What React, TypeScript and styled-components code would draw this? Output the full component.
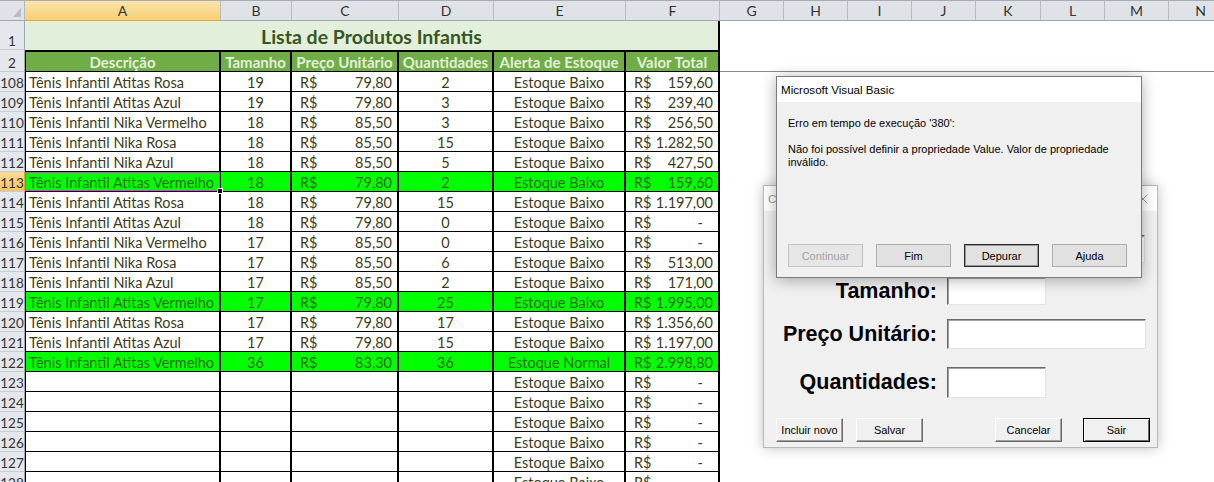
import React, { Fragment } from 'react';
import styled, { createGlobalStyle, css } from 'styled-components';

const SHEET_FONT = `Lato, "Open Sans", sans-serif`;
const UI_FONT = `"Liberation Sans", Arial, sans-serif`;

const GlobalStyle = createGlobalStyle`
  *, *::before, *::after { box-sizing: border-box; }
  html, body { margin: 0; padding: 0; background: #fff; }
  body { overflow: hidden; }
`;

const Page = styled.div`
  position: relative;
  width: 1214px;
  height: 482px;
  overflow: hidden;
  background: #fff;
`;

/* ---------- spreadsheet ---------- */

const Sheet = styled.div`
  display: grid;
  grid-template-columns: 25px 196px 71px 107px 95px 132px 94px 64px 64px 64px 64px 65px 64px 64px 64px;
  grid-template-rows: 21px 29px 22px repeat(21, 20px);
  font-family: ${SHEET_FONT};
  font-size: 14.5px;
  color: #42401d;
`;

const Corner = styled.div`
  position: relative;
  background: #dfe3e8;
  border-top: 1px solid #a5acb5;
  border-right: 1px solid #b1b8c1;
  border-bottom: 1px solid #9ea6b0;

  &::after {
    content: '';
    position: absolute;
    right: 3px;
    bottom: 3px;
    width: 8px;
    height: 9px;
    background: #b7bcc3;
    clip-path: polygon(100% 0, 100% 100%, 0 100%);
  }
`;

const ColHead = styled.div<{ $active?: boolean }>`
  display: flex;
  align-items: center;
  justify-content: center;
  font-size: 14px;
  color: #333;
  border-top: 1px solid #a5acb5;
  border-right: 1px solid #b6bcc4;
  ${(p) =>
    p.$active
      ? css`
          background: linear-gradient(#fbe4a9, #f7cf74);
          border-bottom: 1px solid #e2a43c;
        `
      : css`
          background: #dfe3e8;
          border-bottom: 1px solid #9ea6b0;
        `}
`;

const RowHead = styled.div<{ $active?: boolean }>`
  display: flex;
  align-items: flex-end;
  justify-content: center;
  line-height: 16px;
  font-size: 13.5px;
  color: #333;
  border-bottom: 1px solid #c6ccd4;
  ${(p) =>
    p.$active
      ? css`
          background: linear-gradient(#fadc96, #f5c566);
          border-right: 1px solid #e2a43c;
        `
      : css`
          background: #e4e7ec;
          border-right: 1px solid #9ea6b0;
        `}
`;

const TitleCell = styled.div`
  grid-column: 2 / 8;
  display: flex;
  align-items: center;
  justify-content: center;
  padding-top: 1px;
  background: #e2efda;
  border-right: 2px solid #000;
  color: #375623;
  font-weight: 700;
  font-size: 19.5px;
`;

const HeadCell = styled.div<{ $first?: boolean }>`
  display: flex;
  align-items: center;
  justify-content: center;
  padding-top: 1px;
  background: #70ad47;
  color: #e2efda;
  font-weight: 700;
  font-size: 15px;
  white-space: nowrap;
  overflow: hidden;
  border-top: 2px solid #000;
  border-right: 2px solid #000;
  border-bottom: 1px solid #000;
  ${(p) => p.$first && 'border-left: 1px solid #000;'}
`;

const Blank = styled.div<{ $freeze?: boolean }>`
  grid-column: 8 / -1;
  background: #fff;
  ${(p) => p.$freeze && 'border-bottom: 1px solid #8a8a8a;'}
`;

const Cell = styled.div<{ $green?: boolean; $center?: boolean; $first?: boolean }>`
  position: relative;
  display: flex;
  align-items: flex-end;
  justify-content: ${(p) => (p.$center ? 'center' : 'flex-start')};
  padding: 0 3px;
  white-space: nowrap;
  line-height: 16px;
  background: ${(p) => (p.$green ? '#00ff00' : '#fff')};
  color: ${(p) => (p.$green ? '#2c6b17' : '#3d3b1a')};
  border-right: 2px solid #000;
  border-bottom: 1px solid #000;
  ${(p) => p.$first && 'border-left: 1px solid #000;'}
`;

const MoneyCell = styled(Cell)`
  justify-content: space-between;
  padding: 0 5px 0 8px;
`;

const Amount = styled.span<{ $dash?: boolean }>`
  ${(p) => p.$dash && 'margin-right: 10px;'}
`;

const Selection = styled.div`
  position: absolute;
  inset: 0 -1px 0 -1px;
  box-shadow: inset 0 0 0 1px #e03de0;
  z-index: 2;
  pointer-events: none;
`;

const FillHandle = styled.div`
  position: absolute;
  right: -3px;
  bottom: -3px;
  width: 6px;
  height: 6px;
  background: #000;
  border: 1px solid #fff;
`;

/* ---------- windows ---------- */

const FormWindow = styled.div`
  position: absolute;
  left: 763px;
  top: 185px;
  width: 395px;
  height: 263px;
  display: flex;
  flex-direction: column;
  background: #f0f0f0;
  border: 1px solid #b8b8b8;
  box-shadow: 0 0 12px rgba(0, 0, 0, 0.25);
  font-family: ${UI_FONT};
  z-index: 4;
`;

const MsgWindow = styled.div`
  position: absolute;
  left: 776px;
  top: 76px;
  width: 366px;
  height: 202px;
  display: flex;
  flex-direction: column;
  background: #f0f0f0;
  border: 1px solid #7b7b7b;
  box-shadow: 0 2px 14px rgba(0, 0, 0, 0.32);
  font-family: ${UI_FONT};
  z-index: 6;
`;

const TitleBar = styled.div<{ $inactive?: boolean }>`
  flex: 0 0 25px;
  display: flex;
  align-items: center;
  justify-content: space-between;
  padding: 0 9px 0 4px;
  background: #fff;
  font-size: 11.6px;
  color: ${(p) => (p.$inactive ? '#9b9b9b' : '#000')};
`;

const FormBody = styled.div`
  flex: 1;
  display: flex;
  flex-direction: column;
  padding-top: 24px;
`;

const FieldRow = styled.div<{ $gap: number }>`
  display: grid;
  grid-template-columns: 173px auto;
  column-gap: 10px;
  align-items: center;
  margin-top: ${(p) => p.$gap}px;
`;

const FieldLabel = styled.div`
  text-align: right;
  font-weight: 700;
  font-size: 21.5px;
  color: #000;
  white-space: nowrap;
`;

const TextBox = styled.div<{ $w: number; $h: number }>`
  width: ${(p) => p.$w}px;
  height: ${(p) => p.$h}px;
  background: #fff;
  border: 1px solid;
  border-color: #6a6a6a #e3e3e3 #e3e3e3 #6a6a6a;
  box-shadow: inset 1px 1px 0 #a0a0a0;
`;

const FormButtons = styled.div`
  display: flex;
  justify-content: space-between;
  margin-top: 20px;
  padding: 0 7px 0 12px;
`;

const ButtonGroup = styled.div<{ $gap: number }>`
  display: flex;
  gap: ${(p) => p.$gap}px;
`;

const FormButton = styled.div<{ $default?: boolean }>`
  width: 67px;
  height: 24px;
  display: flex;
  align-items: center;
  justify-content: center;
  font-size: 11px;
  color: #000;
  background: #f0f0f0;
  border: 1px solid;
  border-color: #fff #6a6a6a #6a6a6a #fff;
  box-shadow: inset -1px -1px 0 #a0a0a0;
  ${(p) =>
    p.$default &&
    css`
      border: 1px solid #000;
      box-shadow: inset 1px 1px 0 #fff, inset -1px -1px 0 #6a6a6a;
    `}
`;

const MsgBody = styled.div`
  flex: 1;
  display: flex;
  flex-direction: column;
  padding: 15px 12px 10px 11px;
`;

const MsgText = styled.p`
  margin: 0;
  font-size: 11px;
  line-height: 13px;
  color: #000;
  white-space: nowrap;
`;

const MsgButtons = styled.div`
  margin-top: auto;
  display: flex;
  gap: 13px;
`;

const MsgButton = styled.div<{ $state?: 'disabled' | 'default' }>`
  width: 75px;
  height: 23px;
  display: flex;
  align-items: center;
  justify-content: center;
  font-size: 11px;
  color: #000;
  background: #e1e1e1;
  border: 1px solid #adadad;
  ${(p) =>
    p.$state === 'disabled' &&
    css`
      color: #a3a3a3;
      background: #e6e6e6;
      border-color: #c4c4c4;
    `}
  ${(p) =>
    p.$state === 'default' &&
    css`
      border-color: #2a2a2a;
      box-shadow: inset 0 0 0 1px #9a9a9a;
    `}
`;

const CloseIcon = () => (
  <svg width="10" height="10" viewBox="0 0 10 10">
    <path d="M0.5 0.5 L9.5 9.5 M9.5 0.5 L0.5 9.5" stroke="#9b9b9b" strokeWidth="1" fill="none" />
  </svg>
);

/* ---------- data ---------- */

type Item = {
  n: number;
  desc?: string;
  tam?: string;
  preco?: string;
  qtd?: string;
  alerta: string;
  total: string;
  green?: boolean;
};

const LETTERS = ['A', 'B', 'C', 'D', 'E', 'F', 'G', 'H', 'I', 'J', 'K', 'L', 'M', 'N'];
const HEADERS = ['Descrição', 'Tamanho', 'Preço Unitário', 'Quantidades', 'Alerta de Estoque', 'Valor Total'];

const BAIXO = 'Estoque Baixo';

const ITEMS: Item[] = [
  { n: 108, desc: 'Tênis Infantil Atitas Rosa', tam: '19', preco: '79,80', qtd: '2', alerta: BAIXO, total: '159,60' },
  { n: 109, desc: 'Tênis Infantil Atitas Azul', tam: '19', preco: '79,80', qtd: '3', alerta: BAIXO, total: '239,40' },
  { n: 110, desc: 'Tênis Infantil Nika Vermelho', tam: '18', preco: '85,50', qtd: '3', alerta: BAIXO, total: '256,50' },
  { n: 111, desc: 'Tênis Infantil Nika Rosa', tam: '18', preco: '85,50', qtd: '15', alerta: BAIXO, total: '1.282,50' },
  { n: 112, desc: 'Tênis Infantil Nika Azul', tam: '18', preco: '85,50', qtd: '5', alerta: BAIXO, total: '427,50' },
  { n: 113, desc: 'Tênis Infantil Atitas Vermelho', tam: '18', preco: '79,80', qtd: '2', alerta: BAIXO, total: '159,60', green: true },
  { n: 114, desc: 'Tênis Infantil Atitas Rosa', tam: '18', preco: '79,80', qtd: '15', alerta: BAIXO, total: '1.197,00' },
  { n: 115, desc: 'Tênis Infantil Atitas Azul', tam: '18', preco: '79,80', qtd: '0', alerta: BAIXO, total: '-' },
  { n: 116, desc: 'Tênis Infantil Nika Vermelho', tam: '17', preco: '85,50', qtd: '0', alerta: BAIXO, total: '-' },
  { n: 117, desc: 'Tênis Infantil Nika Rosa', tam: '17', preco: '85,50', qtd: '6', alerta: BAIXO, total: '513,00' },
  { n: 118, desc: 'Tênis Infantil Nika Azul', tam: '17', preco: '85,50', qtd: '2', alerta: BAIXO, total: '171,00' },
  { n: 119, desc: 'Tênis Infantil Atitas Vermelho', tam: '17', preco: '79,80', qtd: '25', alerta: BAIXO, total: '1.995,00', green: true },
  { n: 120, desc: 'Tênis Infantil Atitas Rosa', tam: '17', preco: '79,80', qtd: '17', alerta: BAIXO, total: '1.356,60' },
  { n: 121, desc: 'Tênis Infantil Atitas Azul', tam: '17', preco: '79,80', qtd: '15', alerta: BAIXO, total: '1.197,00' },
  { n: 122, desc: 'Tênis Infantil Atitas Vermelho', tam: '36', preco: '83,30', qtd: '36', alerta: 'Estoque Normal', total: '2.998,80', green: true },
  ...[123, 124, 125, 126, 127, 128].map((n) => ({ n, alerta: BAIXO, total: '-' })),
];

const SELECTED_ROW = 113;

function DataRow({ item }: { item: Item }) {
  const g = item.green;
  return (
    <>
      <RowHead $active={item.n === SELECTED_ROW}>{item.n}</RowHead>
      <Cell $first $green={g}>
        {item.desc}
        {item.n === SELECTED_ROW && (
          <Selection>
            <FillHandle />
          </Selection>
        )}
      </Cell>
      <Cell $center $green={g}>{item.tam}</Cell>
      {item.preco ? (
        <MoneyCell $green={g}>
          <span>R$</span>
          <Amount>{item.preco}</Amount>
        </MoneyCell>
      ) : (
        <Cell />
      )}
      <Cell $center $green={g}>{item.qtd}</Cell>
      <Cell $center $green={g}>{item.alerta}</Cell>
      <MoneyCell $green={g}>
        <span>R$</span>
        <Amount $dash={item.total === '-'}>{item.total}</Amount>
      </MoneyCell>
      <Blank />
    </>
  );
}

export default function App() {
  return (
    <Page>
      <GlobalStyle />
      <Sheet>
        <Corner />
        {LETTERS.map((l) => (
          <ColHead key={l} $active={l === 'A'}>
            {l}
          </ColHead>
        ))}

        <RowHead>1</RowHead>
        <TitleCell>Lista de Produtos Infantis</TitleCell>
        <Blank />

        <RowHead>2</RowHead>
        {HEADERS.map((h, i) => (
          <HeadCell key={h} $first={i === 0}>
            {h}
          </HeadCell>
        ))}
        <Blank $freeze />

        {ITEMS.map((item) => (
          <Fragment key={item.n}>
            <DataRow item={item} />
          </Fragment>
        ))}
      </Sheet>

      <FormWindow>
        <TitleBar $inactive>
          <span>Cadastro de Produtos</span>
          <CloseIcon />
        </TitleBar>
        <FormBody>
          <FieldRow $gap={0}>
            <FieldLabel>Descrição:</FieldLabel>
            <TextBox $w={198} $h={28} />
          </FieldRow>
          <FieldRow $gap={14}>
            <FieldLabel>Tamanho:</FieldLabel>
            <TextBox $w={99} $h={28} />
          </FieldRow>
          <FieldRow $gap={14}>
            <FieldLabel>Preço Unitário:</FieldLabel>
            <TextBox $w={199} $h={30} />
          </FieldRow>
          <FieldRow $gap={18}>
            <FieldLabel>Quantidades:</FieldLabel>
            <TextBox $w={99} $h={31} />
          </FieldRow>
          <FormButtons>
            <ButtonGroup $gap={13}>
              <FormButton>Incluir novo</FormButton>
              <FormButton>Salvar</FormButton>
            </ButtonGroup>
            <ButtonGroup $gap={21}>
              <FormButton>Cancelar</FormButton>
              <FormButton $default>Sair</FormButton>
            </ButtonGroup>
          </FormButtons>
        </FormBody>
      </FormWindow>

      <MsgWindow>
        <TitleBar>Microsoft Visual Basic</TitleBar>
        <MsgBody>
          <MsgText>
            Erro em tempo de execução '380':
            <br />
            <br />
            Não foi possível definir a propriedade Value. Valor de propriedade
            <br />
            inválido.
          </MsgText>
          <MsgButtons>
            <MsgButton $state="disabled">Continuar</MsgButton>
            <MsgButton>Fim</MsgButton>
            <MsgButton $state="default">Depurar</MsgButton>
            <MsgButton>Ajuda</MsgButton>
          </MsgButtons>
        </MsgBody>
      </MsgWindow>
    </Page>
  );
}
